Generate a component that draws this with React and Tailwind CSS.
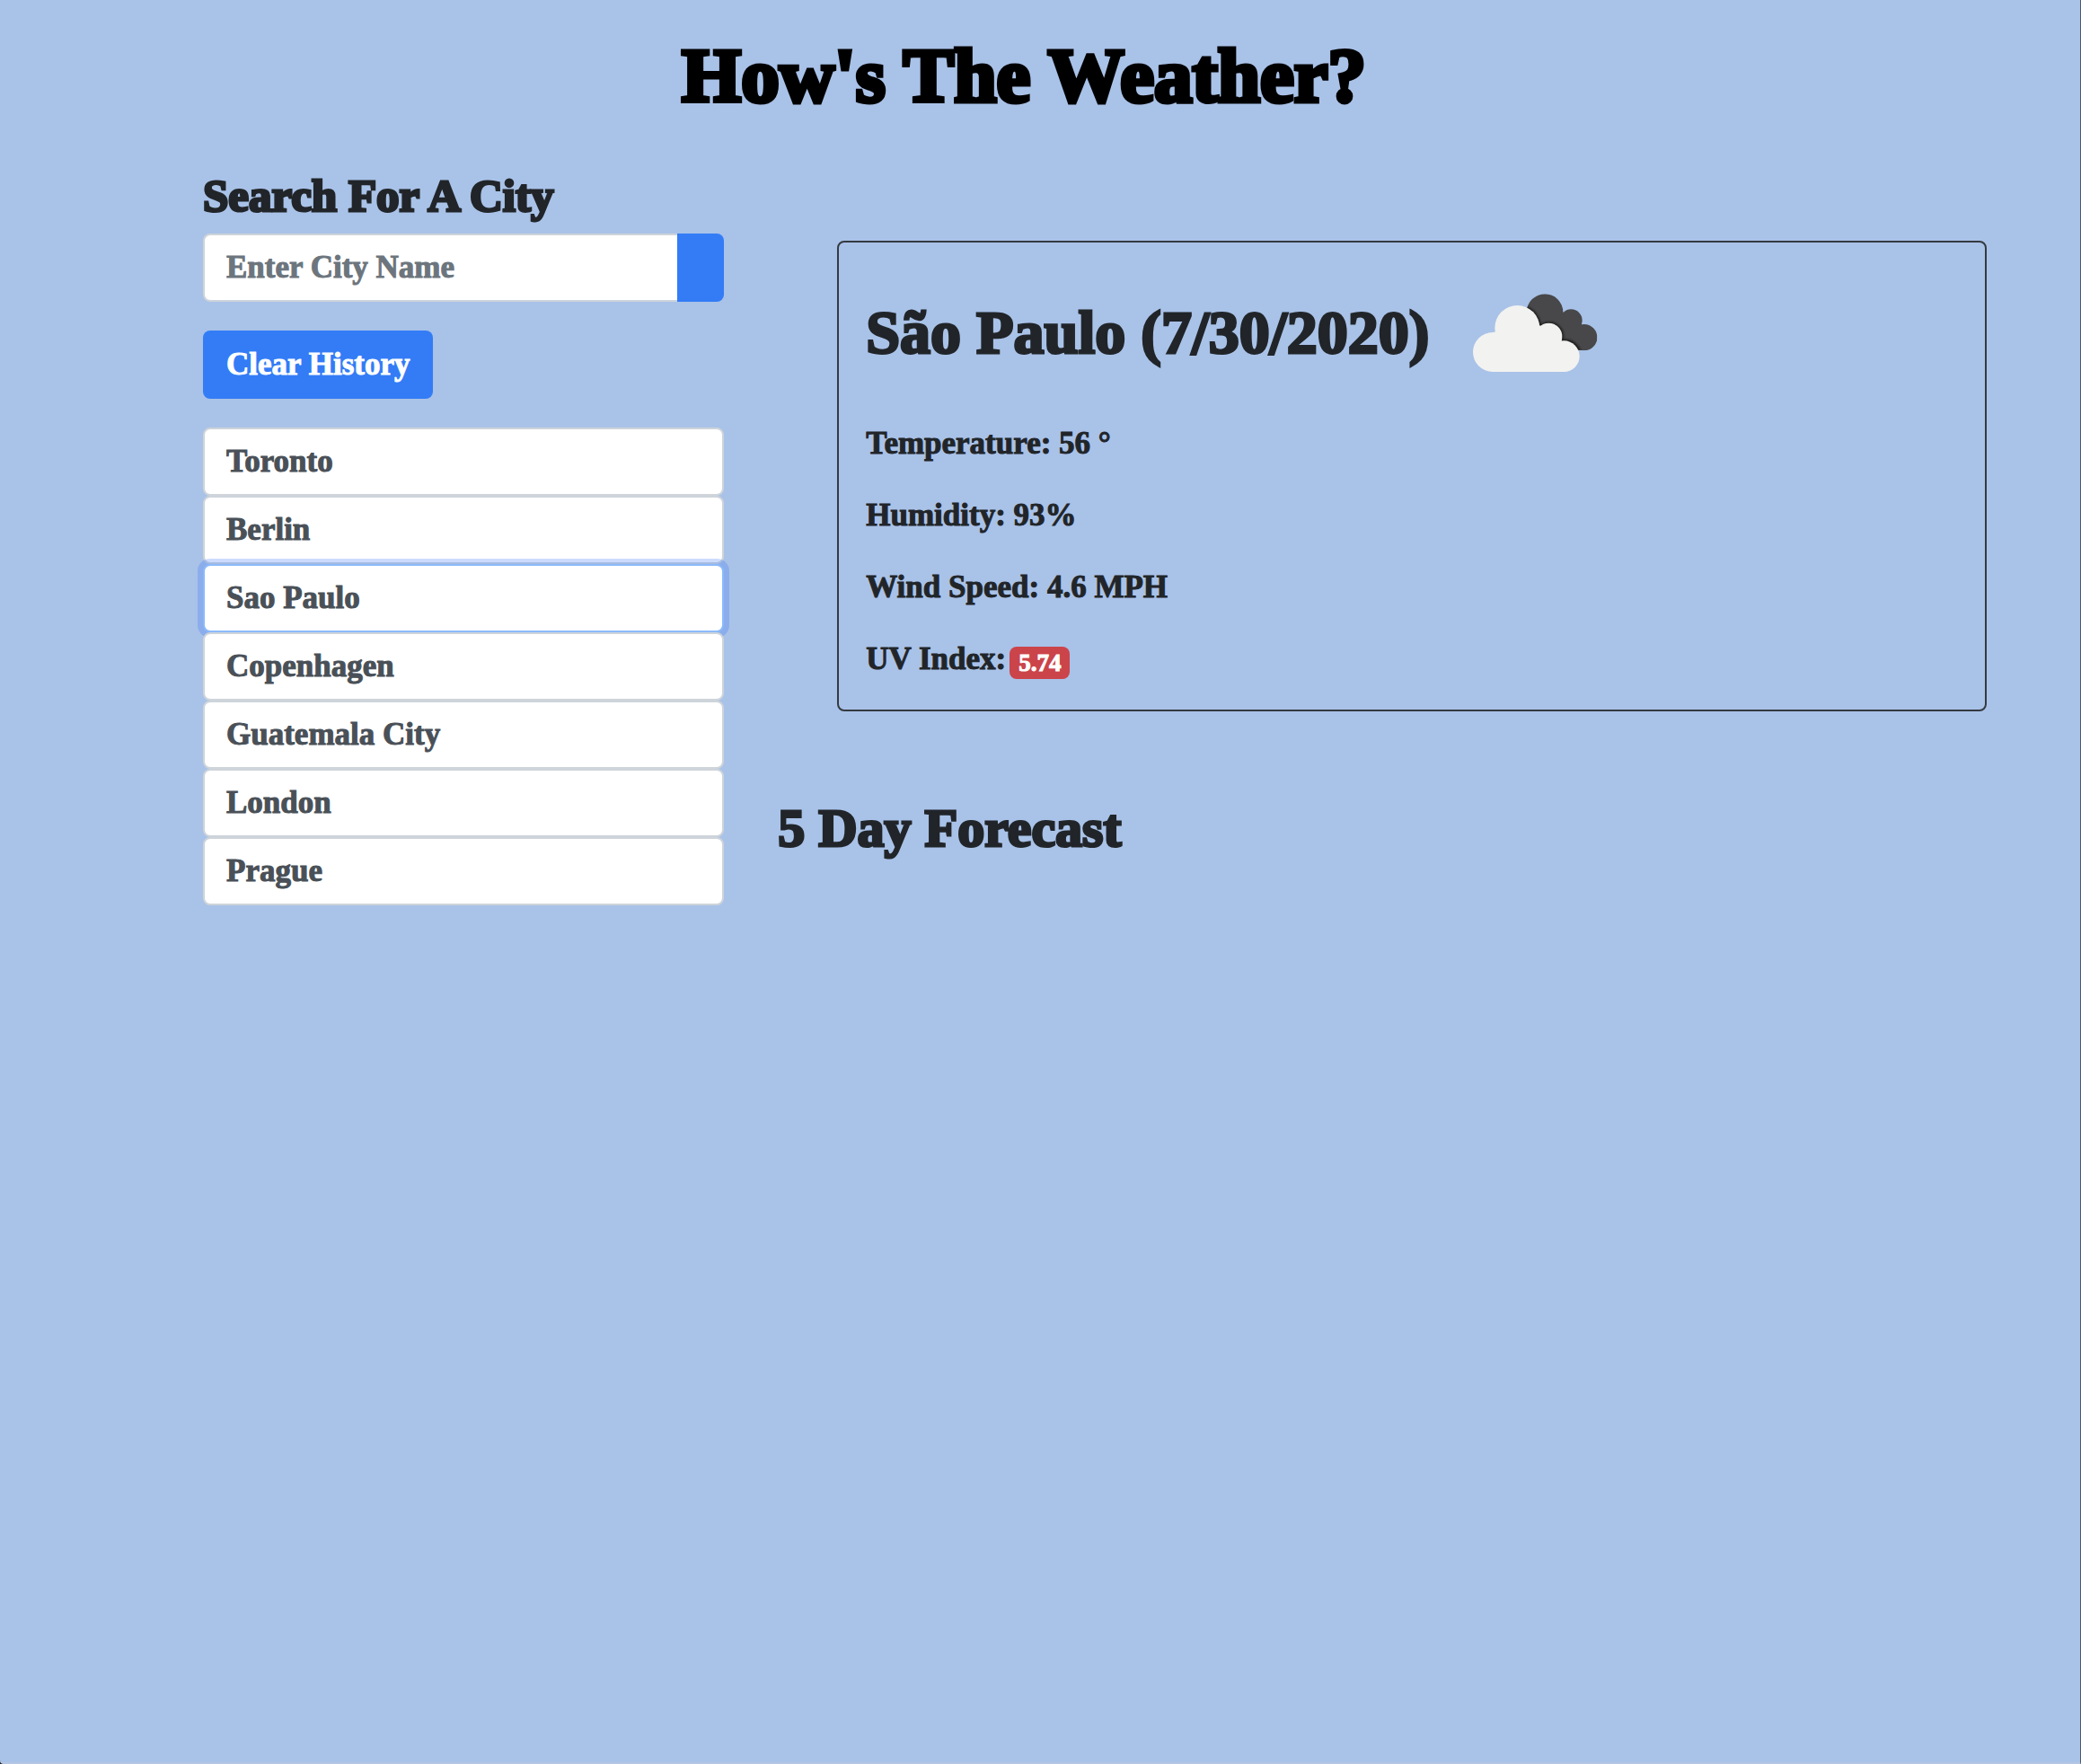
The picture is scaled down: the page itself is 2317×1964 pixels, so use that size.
const cities = ["Toronto", "Berlin", "Sao Paulo", "Copenhagen", "Guatemala City", "London", "Prague"];
const selectedCity = "Sao Paulo";

function BrokenClouds() {
  return (
    <svg viewBox="27 30 600 420" className="h-[140px] w-[200px] shrink-0" role="img" aria-label="Broken clouds">
      <defs>
        <clipPath id="back-cloud">
          <circle cx="360" cy="173" r="61" />
          <circle cx="448" cy="200" r="37" />
          <circle cx="491" cy="257" r="44" />
          <path d="M310 180 L420 172 L484 214 L491 301 L400 290 Z" />
        </clipPath>
        <filter id="soft-edge" x="-20%" y="-20%" width="140%" height="140%">
          <feGaussianBlur stdDeviation="3" />
        </filter>
      </defs>
      <g clipPath="url(#back-cloud)">
        <rect x="290" y="100" width="260" height="210" fill="#48484a" />
        <g fill="#1d1d1f" filter="url(#soft-edge)">
          <circle cx="270" cy="225" r="78" />
          <circle cx="375" cy="253" r="48" />
          <circle cx="427" cy="319" r="56" />
        </g>
      </g>
      <g fill="#f2f2f0">
        <circle cx="186" cy="306" r="66" />
        <circle cx="268" cy="225" r="75" />
        <circle cx="373" cy="254" r="45" />
        <circle cx="424" cy="320" r="52" />
        <path d="M186 240 L340 215 L415 262 L424 372 L186 372 Z" />
      </g>
    </svg>
  );
}

function Search() {
  return (
    <aside className="w-[calc(25vw+1px)] shrink-0">
      <form onSubmit={(e) => e.preventDefault()}>
        <label htmlFor="city" className="block text-[51px] leading-[60px] [-webkit-text-stroke:3px]">
          Search For A City
        </label>
        <div className="mt-3 flex h-[76px]">
          <input
            id="city"
            type="text"
            placeholder="Enter City Name"
            className="min-w-0 flex-1 rounded-l-lg border-2 border-r-0 border-[#ced4da] bg-white px-6 placeholder:text-[#6c757d] placeholder:opacity-100"
          />
          <button type="submit" aria-label="Search" className="w-[52px] rounded-r-lg bg-[#337cf6]" />
        </div>
      </form>
      <button type="button" className="mt-8 h-[76px] rounded-lg bg-[#337cf6] px-[26px] text-white">
        Clear History
      </button>
      <ul className="mt-8">
        {cities.map((city) => (
          <li key={city}>
            <button
              type="button"
              className={
                "block h-[76px] w-full rounded-lg border-2 bg-white px-6 text-left text-[#495057] " +
                (city === selectedCity
                  ? "border-[#8bbafa] shadow-[0_0_0_6px_rgba(51,110,246,0.25)]"
                  : "border-[#ced4da]")
              }
            >
              {city}
            </button>
          </li>
        ))}
      </ul>
    </aside>
  );
}

function CurrentWeather() {
  return (
    <section className="ml-[66px] rounded-lg border-2 border-[#343a40] px-[30px] pt-[30px] pb-8">
      <div className="flex items-center gap-[18px]">
        <h2 className="text-[68px] leading-20 whitespace-nowrap [-webkit-text-stroke:3px]">São Paulo (7/30/2020)</h2>
        <BrokenClouds />
      </div>
      <div className="mt-[30px] flex flex-col gap-8 leading-12">
        <p>Temperature: 56 °</p>
        <p>Humidity: 93%</p>
        <p>Wind Speed: 4.6 MPH</p>
        <p className="flex items-center gap-1">
          UV Index:
          <span className="mt-2 rounded-lg bg-[#cb444a] px-[10px] text-[27px] leading-9 text-white">5.74</span>
        </p>
      </div>
    </section>
  );
}

export default function App() {
  return (
    <div className="bg-[#1c1f24]">
      <div className="min-h-screen rounded-bl-[4px] border-r border-b-2 border-r-[#4d5a70] border-b-[#b5c6e4] bg-[#a9c2e8] font-['Liberation_Serif',serif] text-[35px] font-bold text-[#212529] [-webkit-text-stroke:1px]">
        <header className="pt-9 pr-9">
          <h1 className="text-center text-[85px] leading-24 text-black [-webkit-text-stroke:5px]">How's The Weather?</h1>
        </header>
        <main className="mt-14 flex gap-[60px] pr-[104px] pl-[226px]">
          <Search />
          <div className="min-w-0 flex-1 pt-20">
            <CurrentWeather />
            <h2 className="mt-[94px] text-[60px] leading-[72px] [-webkit-text-stroke:3px]">5 Day Forecast</h2>
          </div>
        </main>
      </div>
    </div>
  );
}
